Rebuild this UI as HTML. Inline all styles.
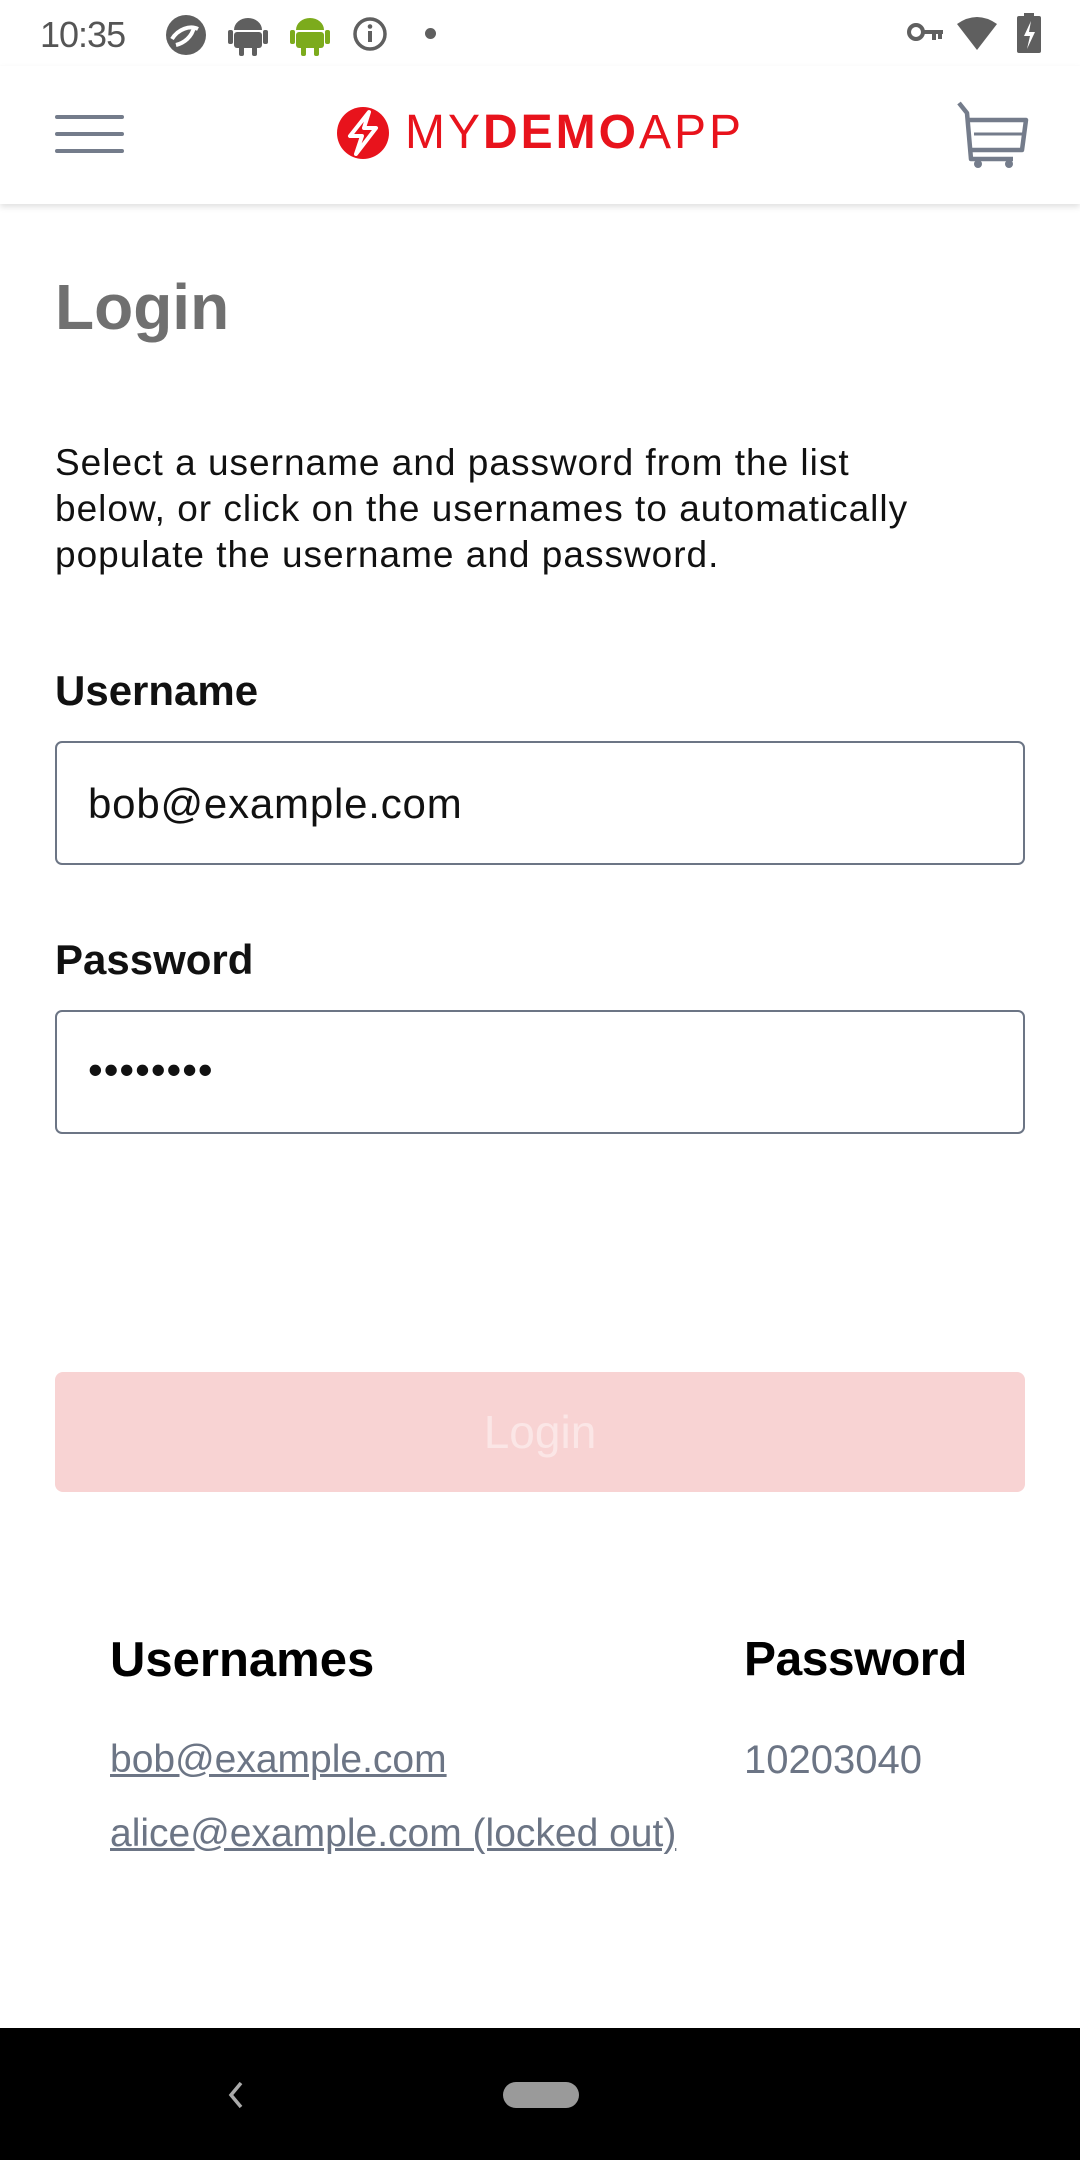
<!DOCTYPE html>
<html><head><meta charset="utf-8"><style>
*{margin:0;padding:0;box-sizing:border-box}
body{width:1080px;height:2160px;background:#fff;position:relative;overflow:hidden;font-family:"Liberation Sans",sans-serif}
.a{position:absolute;white-space:nowrap}
.sb{color:#555;font-size:36px}
.hdr{position:absolute;left:0;top:66px;width:1080px;height:138px;background:#fff;box-shadow:0 3px 6px rgba(0,0,0,.12)}
.inp{position:absolute;left:55px;width:970px;height:124px;border:2px solid #6c7585;border-radius:7px}
.lbl{font-size:42px;color:#111;font-weight:bold}
.p{font-size:37px;color:#111;line-height:46px;letter-spacing:1px}
.lnk{font-size:39px;color:#6c7585;text-decoration:underline;letter-spacing:0}
</style></head><body>
<div class="a sb" style="left:40px;top:14px;letter-spacing:-1px">10:35</div>
<svg class="a" style="left:164px;top:13px" width="44" height="44" viewBox="0 0 44 44"><circle cx="22" cy="22" r="20" fill="#5f5f5f"/><path d="M8 26c6-10 18-14 26-10M12 32c8-2 16-8 18-18" stroke="#fff" stroke-width="4" fill="none"/></svg>
<svg class="a" style="left:228px;top:12px" width="40" height="44" viewBox="0 0 40 44"><path d="M6 18a14 12 0 0 1 28 0z" fill="#5f5f5f"/><rect x="6" y="20" width="28" height="16" rx="3" fill="#5f5f5f"/><rect x="0" y="18" width="5" height="14" rx="2" fill="#5f5f5f"/><rect x="35" y="18" width="5" height="14" rx="2" fill="#5f5f5f"/><rect x="11" y="34" width="5" height="10" rx="2" fill="#5f5f5f"/><rect x="24" y="34" width="5" height="10" rx="2" fill="#5f5f5f"/></svg>
<svg class="a" style="left:290px;top:12px" width="40" height="44" viewBox="0 0 40 44"><path d="M6 18a14 12 0 0 1 28 0z" fill="#7cab1c"/><rect x="6" y="20" width="28" height="16" rx="3" fill="#7cab1c"/><rect x="0" y="18" width="5" height="14" rx="2" fill="#7cab1c"/><rect x="35" y="18" width="5" height="14" rx="2" fill="#7cab1c"/><rect x="11" y="34" width="5" height="10" rx="2" fill="#7cab1c"/><rect x="24" y="34" width="5" height="10" rx="2" fill="#7cab1c"/></svg>
<svg class="a" style="left:352px;top:16px" width="36" height="36" viewBox="0 0 36 36"><circle cx="18" cy="18" r="15" stroke="#5f5f5f" stroke-width="3.5" fill="none"/><rect x="16" y="15" width="4" height="11" fill="#5f5f5f"/><circle cx="18" cy="10.5" r="2.3" fill="#5f5f5f"/></svg>
<div class="a" style="left:425px;top:28px;width:11px;height:11px;border-radius:50%;background:#5f5f5f"></div>
<svg class="a" style="left:906px;top:20px" width="40" height="26" viewBox="0 0 40 26"><circle cx="10" cy="12" r="7" stroke="#5f5f5f" stroke-width="4" fill="none"/><path d="M17 12h20M28 12v8M34 12v7" stroke="#5f5f5f" stroke-width="4"/></svg>
<svg class="a" style="left:955px;top:16px" width="44" height="36" viewBox="0 0 44 36"><path d="M2 8Q22-6 42 8L22 34z" fill="#5f5f5f"/></svg>
<svg class="a" style="left:1017px;top:13px" width="24" height="40" viewBox="0 0 24 40"><rect x="7" y="0" width="10" height="4" fill="#5f5f5f"/><rect x="0" y="3" width="24" height="37" rx="2" fill="#5f5f5f"/><path d="M14 8l-7 15h6l-3 13 8-17h-6z" fill="#fff"/></svg>
<div class="hdr"></div>
<div class="a" style="left:55px;top:115px;width:69px;height:4px;background:#747c8b;border-radius:2px"></div>
<div class="a" style="left:55px;top:132px;width:69px;height:4px;background:#747c8b;border-radius:2px"></div>
<div class="a" style="left:55px;top:149px;width:69px;height:4px;background:#747c8b;border-radius:2px"></div>
<svg class="a" style="left:336px;top:106px" width="54" height="54" viewBox="0 0 54 54"><circle cx="27" cy="27" r="26" fill="#e8131c"/><path d="M33 6L14 30h12l-6 18 20-26H28z" fill="none" stroke="#fff" stroke-width="4" stroke-linejoin="round"/></svg>
<div class="a" style="left:405px;top:106px;font-size:48px;color:#e8131c;letter-spacing:3px;line-height:54px">MY<b>DEMO</b>APP</div>
<svg class="a" style="left:956px;top:100px" width="74" height="70" viewBox="0 0 74 70"><path d="M3 3l8 10 4 46h42M13 20h57l-4 30H16" fill="none" stroke="#747c8b" stroke-width="4.5" stroke-linejoin="round"/><path d="M18 34h48" stroke="#747c8b" stroke-width="3"/><circle cx="22" cy="64" r="4" fill="#747c8b"/><circle cx="53" cy="64" r="4" fill="#747c8b"/></svg>
<div class="a" style="left:55px;top:270px;font-size:64px;color:#707070;font-weight:bold">Login</div>
<div class="a p" style="left:55px;top:440px">Select a username and password from the list<br>below, or click on the usernames to automatically<br>populate the username and password.</div>
<div class="a lbl" style="left:55px;top:667px">Username</div>
<div class="inp" style="top:741px"></div>
<div class="a" style="left:88px;top:780px;font-size:42px;color:#111;letter-spacing:0.8px">bob@example.com</div>
<div class="a lbl" style="left:55px;top:936px">Password</div>
<div class="inp" style="top:1010px"></div>
<div class="a" style="left:88px;top:1046px;font-size:42px;color:#111;letter-spacing:1px">••••••••</div>
<div class="a" style="left:55px;top:1372px;width:970px;height:120px;background:#f8d3d3;border-radius:8px"></div>
<div class="a" style="left:0;top:1405px;width:1080px;text-align:center;font-size:46px;color:#fbe6e6">Login</div>
<div class="a" style="left:110px;top:1632px;font-size:49px;font-weight:bold;color:#000">Usernames</div>
<div class="a" style="left:744px;top:1632px;font-size:48px;font-weight:bold;color:#000;letter-spacing:-0.5px">Password</div>
<div class="a lnk" style="left:110px;top:1738px">bob@example.com</div>
<div class="a lnk" style="left:110px;top:1812px">alice@example.com (locked out)</div>
<div class="a" style="left:744px;top:1738px;font-size:40px;color:#6c7585">10203040</div>
<div class="a" style="left:0;top:2028px;width:1080px;height:132px;background:#000"></div>
<svg class="a" style="left:226px;top:2080px" width="20" height="30" viewBox="0 0 20 30"><path d="M15 3L5 15l10 12" stroke="#aaa" stroke-width="3.5" fill="none"/></svg>
<div class="a" style="left:503px;top:2082px;width:76px;height:26px;border-radius:13px;background:#9a9a9a"></div>
</body></html>
